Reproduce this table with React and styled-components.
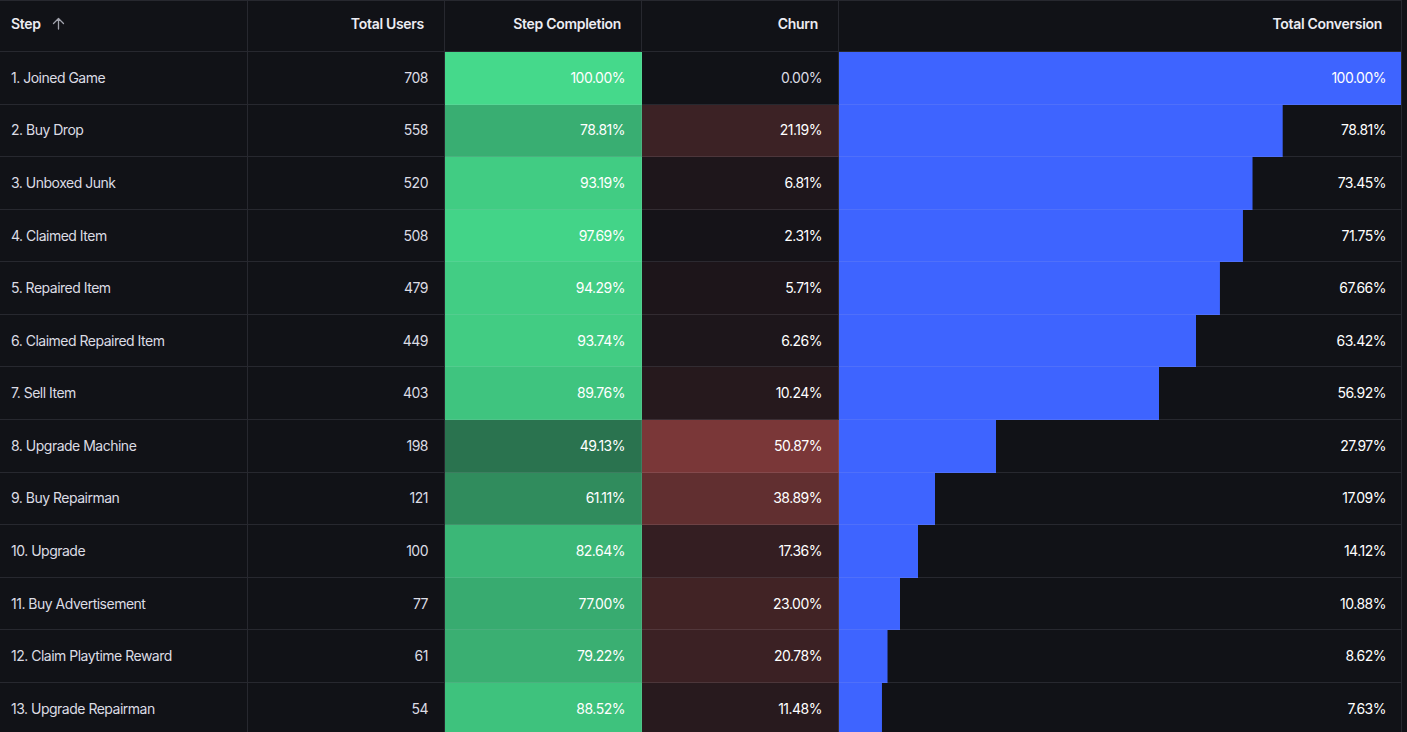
import React from 'react'
import styled, {createGlobalStyle} from 'styled-components'

const GlobalStyle = createGlobalStyle`
    html, body {
        margin: 0;
        padding: 0;
        background: #111217;
    }
    body {
        font-family: Inter, "Noto Sans", sans-serif;
        -webkit-font-smoothing: antialiased;
    }
`;

const BORDER = 'rgba(204, 204, 220, 0.12)';
const COLUMNS = '248px 197px 197px 197px 563px';

const Table = styled.div`
    display: flex;
    flex-direction: column;
    width: 1402px;
    height: 732px;
    overflow: hidden;
    border-right: 1px solid ${BORDER};
    box-sizing: border-box;
`;

const HeaderRow = styled.div`
    display: grid;
    grid-template-columns: ${COLUMNS};
    height: 52px;
    flex-shrink: 0;
    box-sizing: border-box;
    border-top: 1px solid ${BORDER};
    border-bottom: 1px solid ${BORDER};
`;

const HeaderCell = styled.div`
    display: flex;
    align-items: center;
    justify-content: ${props => props.$align === 'right' ? 'flex-end' : 'flex-start'};
    gap: 11px;
    padding: 0 20px 5px 11px;
    font-size: 14px;
    font-weight: 600;
    letter-spacing: -0.3px;
    color: #ececf2;
    border-right: ${props => props.$last ? 'none' : `1px solid ${BORDER}`};
`;

const Row = styled.div`
    display: grid;
    grid-template-columns: ${COLUMNS};
    height: 52.58px;
    flex-shrink: 0;
`;

const Cell = styled.div`
    display: flex;
    align-items: center;
    justify-content: ${props => props.$align === 'right' ? 'flex-end' : 'flex-start'};
    padding: 0 16px 1px 11px;
    font-size: 14px;
    letter-spacing: -0.5px;
    color: ${props => props.$bg ? '#ffffff' : '#dcdce4'};
    background: ${props => props.$bg || 'transparent'};
    border-right: ${props => props.$last ? 'none' : `1px solid ${BORDER}`};
    border-bottom: 1px solid ${BORDER};
    white-space: nowrap;
`;

const BarCell = styled(Cell)`
    color: #ffffff;
    background-image: linear-gradient(#3e64ff, #3e64ff);
    background-repeat: no-repeat;
    background-origin: border-box;
    background-clip: border-box;
    background-size: ${props => props.$pct}% 100%;
`;

const SortIcon = () => (
    <svg width="13" height="13" viewBox="0 0 13 13" fill="none">
        <path d="M6.5 12V1.5M1.5 6.5l5-5 5 5" stroke="#a2a3ad" strokeWidth="1.3" strokeLinecap="round" strokeLinejoin="round"/>
    </svg>
);

const steps = [
    ['1. Joined Game', 708, 100.00, 0.00, 100.00],
    ['2. Buy Drop', 558, 78.81, 21.19, 78.81],
    ['3. Unboxed Junk', 520, 93.19, 6.81, 73.45],
    ['4. Claimed Item', 508, 97.69, 2.31, 71.75],
    ['5. Repaired Item', 479, 94.29, 5.71, 67.66],
    ['6. Claimed Repaired Item', 449, 93.74, 6.26, 63.42],
    ['7. Sell Item', 403, 89.76, 10.24, 56.92],
    ['8. Upgrade Machine', 198, 49.13, 50.87, 27.97],
    ['9. Buy Repairman', 121, 61.11, 38.89, 17.09],
    ['10. Upgrade', 100, 82.64, 17.36, 14.12],
    ['11. Buy Advertisement', 77, 77.00, 23.00, 10.88],
    ['12. Claim Playtime Reward', 61, 79.22, 20.78, 8.62],
    ['13. Upgrade Repairman', 54, 88.52, 11.48, 7.63],
];

const green = v => `rgba(69, 217, 139, ${v / 100})`;
const red = v => v === 0 ? null : `rgba(223, 93, 88, ${v / 100})`;
const pct = v => v.toFixed(2) + '%';

export default function App() {
    return (
        <React.Fragment>
            <GlobalStyle/>
            <Table>
                <HeaderRow>
                    <HeaderCell>Step <SortIcon/></HeaderCell>
                    <HeaderCell $align="right">Total Users</HeaderCell>
                    <HeaderCell $align="right">Step Completion</HeaderCell>
                    <HeaderCell $align="right">Churn</HeaderCell>
                    <HeaderCell $align="right" $last>Total Conversion</HeaderCell>
                </HeaderRow>
                {steps.map(([name, users, completion, churn, conversion]) => (
                    <Row key={name}>
                        <Cell>{name}</Cell>
                        <Cell $align="right">{users}</Cell>
                        <Cell $align="right" $bg={green(completion)}>{pct(completion)}</Cell>
                        <Cell $align="right" $bg={red(churn)}>{pct(churn)}</Cell>
                        <BarCell $align="right" $last $pct={conversion}>{pct(conversion)}</BarCell>
                    </Row>
                ))}
            </Table>
        </React.Fragment>
    )
}
